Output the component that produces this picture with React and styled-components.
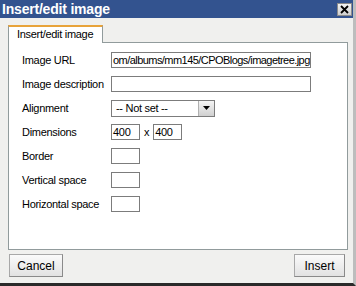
import React from "react";
import styled, { createGlobalStyle } from "styled-components";

const Global = createGlobalStyle`
  html, body { margin: 0; padding: 0; background: #ffffff; }
  body { width: 356px; height: 286px; overflow: hidden; font-family: "Liberation Sans", Arial, sans-serif; }
  #root { width: 356px; height: 286px; }
`;

const Window = styled.div`
  width: 356px;
  height: 286px;
  box-sizing: border-box;
  background: #f0f0ee;
  border-right: 3px solid #bdbdbd;
  border-bottom: 3px solid #2a2a2a;
  display: flex;
  flex-direction: column;
`;

const TitleBar = styled.div`
  height: 18px;
  flex: none;
  background: #33538f;
  display: flex;
  align-items: center;
  justify-content: space-between;
  padding: 0 1px 0 2px;
`;

const Title = styled.span`
  color: #ffffff;
  font-family: "Liberation Sans", Arial, sans-serif;
  font-weight: bold;
  font-size: 14px;
  letter-spacing: -0.2px;
  line-height: 18px;
`;

const CloseButton = styled.div`
  width: 15px;
  height: 13px;
  box-sizing: border-box;
  background: linear-gradient(#f2f2f2, #cfcfcf);
  border: 1px solid #8c8c8c;
  display: flex;
  align-items: center;
  justify-content: center;
`;

const Body = styled.div`
  flex: 1;
  padding: 7px 6px 0 8px;
  display: flex;
  flex-direction: column;
  letter-spacing: -0.3px;
`;

const TabStrip = styled.div`
  display: flex;
  height: 17px;
`;

const Tab = styled.div`
  width: 95px;
  box-sizing: border-box;
  height: 18px;
  background: #ffffff;
  border: 1px solid #919b9c;
  border-top: 2px solid #e8a33a;
  border-bottom: none;
  font-size: 11px;
  color: #000;
  padding-left: 8px;
  line-height: 15px;
  position: relative;
  z-index: 1;
`;

const Panel = styled.div`
  width: 340px;
  height: 208px;
  box-sizing: border-box;
  background: #ffffff;
  border: 1px solid #919b9c;
  padding: 5px 0 0 13px;
`;

const Form = styled.div`
  display: grid;
  grid-template-columns: 89px auto;
  grid-auto-rows: 24px;
  align-items: center;
`;

const Label = styled.div`
  font-size: 11px;
  color: #000;
`;

const Field = styled.div`
  display: flex;
  align-items: center;
  gap: 4px;
  font-size: 11px;
`;

const TextBox = styled.div`
  width: ${(p) => p.$w}px;
  height: 16px;
  box-sizing: border-box;
  border: 1px solid #7c7c7c;
  background: #fff;
  font-size: 11px;
  letter-spacing: ${(p) => (p.$tight ? "-0.55px" : "-0.3px")};
  line-height: 14px;
  padding-left: 1px;
  white-space: nowrap;
  overflow: hidden;
  color: #000;
`;

const Select = styled.div`
  width: 104px;
  height: 17px;
  box-sizing: border-box;
  border: 1px solid #7c7c7c;
  background: #fff;
  display: flex;
  align-items: stretch;
  font-size: 11px;
`;

const SelectText = styled.div`
  flex: 1;
  padding-left: 4px;
  line-height: 15px;
`;

const SelectArrow = styled.div`
  width: 15px;
  background: linear-gradient(#f4f4f4, #d0d0d0);
  border-left: 1px solid #b0b0b0;
  display: flex;
  align-items: center;
  justify-content: center;
`;

const Footer = styled.div`
  display: flex;
  justify-content: space-between;
  margin-top: 4px;
  padding: 0 2px 0 1px;
`;

const Button = styled.div`
  width: ${(p) => p.$w}px;
  height: 23px;
  box-sizing: border-box;
  border: 1px solid #a8a8a8;
  border-right-color: #8a8a8a;
  border-bottom-color: #8a8a8a;
  background: linear-gradient(#fafafa, #e2e2e2);
  font-size: 12px;
  letter-spacing: 0;
  display: flex;
  align-items: center;
  justify-content: center;
  color: #000;
`;

export default function App() {
  return (
    <>
      <Global />
      <Window>
        <TitleBar>
          <Title>Insert/edit image</Title>
          <CloseButton>
            <svg width="9" height="9" viewBox="0 0 9 9">
              <path d="M1 1 L8 8 M8 1 L1 8" stroke="#000" strokeWidth="1.8" />
            </svg>
          </CloseButton>
        </TitleBar>
        <Body>
          <TabStrip>
            <Tab>Insert/edit image</Tab>
          </TabStrip>
          <Panel>
            <Form>
              <Label>Image URL</Label>
              <Field>
                <TextBox $w={200} $tight>om/albums/mm145/CPOBlogs/imagetree.jpg</TextBox>
              </Field>
              <Label>Image description</Label>
              <Field>
                <TextBox $w={200} />
              </Field>
              <Label>Alignment</Label>
              <Field>
                <Select>
                  <SelectText>-- Not set --</SelectText>
                  <SelectArrow>
                    <svg width="7" height="4" viewBox="0 0 7 4">
                      <path d="M0 0 H7 L3.5 4 Z" fill="#000" />
                    </svg>
                  </SelectArrow>
                </Select>
              </Field>
              <Label>Dimensions</Label>
              <Field>
                <TextBox $w={29}>400</TextBox>
                <span>x</span>
                <TextBox $w={29}>400</TextBox>
              </Field>
              <Label>Border</Label>
              <Field>
                <TextBox $w={29} />
              </Field>
              <Label>Vertical space</Label>
              <Field>
                <TextBox $w={29} />
              </Field>
              <Label>Horizontal space</Label>
              <Field>
                <TextBox $w={29} />
              </Field>
            </Form>
          </Panel>
          <Footer>
            <Button $w={54}>Cancel</Button>
            <Button $w={51}>Insert</Button>
          </Footer>
        </Body>
      </Window>
    </>
  );
}
